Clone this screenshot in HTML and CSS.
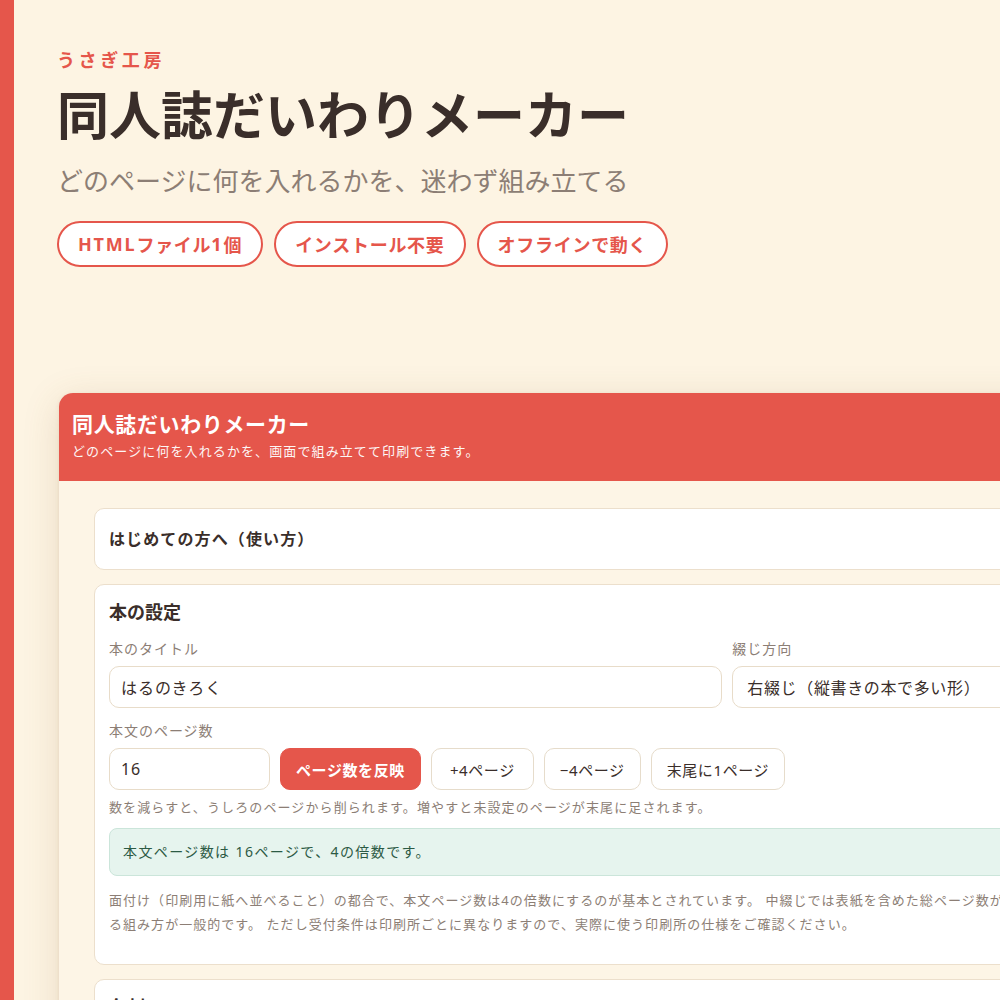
FILE: index.html
```html
<!DOCTYPE html>
<html lang="ja">
<head>
<meta charset="utf-8">
<title>同人誌だいわりメーカー</title>
<link rel="stylesheet" href="styles.css">
</head>
<body>
<div class="page">
  <header class="hero">
    <div class="eyebrow">うさぎ工房</div>
    <h1 class="hero-title">同人誌だいわりメーカー</h1>
    <p class="hero-sub">どのページに何を入れるかを、迷わず組み立てる</p>
    <div class="pills">
      <span class="pill"><span class="latin">HTML</span>ファイル<span class="latin">1</span>個</span>
      <span class="pill">インストール不要</span>
      <span class="pill">オフラインで動く</span>
    </div>
  </header>

  <section class="app">
    <div class="app-head">
      <div class="app-title">同人誌だいわりメーカー</div>
      <div class="app-sub">どのページに何を入れるかを、画面で組み立てて印刷できます。</div>
    </div>
    <div class="app-body">
      <div class="panel panel-summary">はじめての方へ（使い方）</div>

      <div class="panel">
        <h2 class="panel-title">本の設定</h2>
        <div class="grid2">
          <div class="field">
            <label class="label">本のタイトル</label>
            <div class="input">はるのきろく</div>
          </div>
          <div class="field">
            <label class="label">綴じ方向</label>
            <div class="input select">右綴じ（縦書きの本で多い形）</div>
          </div>
        </div>
        <div class="field">
          <label class="label">本文のページ数</label>
          <div class="row">
            <div class="input num">16</div>
            <button class="btn btn-primary">ページ数を反映</button>
            <button class="btn btn-step">+4ページ</button>
            <button class="btn">−4ページ</button>
            <button class="btn">末尾に1ページ</button>
          </div>
        </div>
        <p class="hint">数を減らすと、うしろのページから削られます。増やすと未設定のページが末尾に足されます。</p>
        <div class="notice">本文ページ数は 16ページで、4の倍数です。</div>
        <p class="note">面付け（印刷用に紙へ並べること）の都合で、本文ページ数は4の倍数にするのが基本とされています。 中綴じでは表紙を含めた総ページ数が4の倍数にな<br>る組み方が一般的です。 ただし受付条件は印刷所ごとに異なりますので、実際に使う印刷所の仕様をご確認ください。</p>
      </div>

      <div class="panel">
        <h2 class="panel-title">台割</h2>
      </div>
    </div>
  </section>
</div>
</body>
</html>
```
FILE: styles.css
```css
html, body {
  margin: 0;
  padding: 0;
  overflow: hidden;
  background: #fdf4e3;
}
body {
  font-family: "Noto Sans", "Noto Sans CJK JP", sans-serif;
  color: #3a2e2a;
}
.page {
  border-left: 14px solid #e5564b;
  min-height: 1000px;
  padding: 47px 0 0 43px;
  box-sizing: border-box;
}
.eyebrow {
  font-size: 18px;
  line-height: 26px;
  font-weight: 700;
  color: #e5564b;
  letter-spacing: 0.2em;
}
.hero-title {
  margin: 8px 0 0;
  font-size: 52px;
  line-height: 68px;
  font-weight: 700;
  color: #3a2e2a;
}
.hero-sub {
  margin: 13px 0 0;
  font-size: 26px;
  line-height: 39px;
  color: #8c7e75;
}
.pills {
  display: flex;
  gap: 11px;
  margin-top: 20px;
}
.pill {
  display: inline-flex;
  align-items: center;
  height: 46px;
  box-sizing: border-box;
  padding: 0 19px;
  border: 2px solid #e5564b;
  border-radius: 23px;
  background: #fff;
  color: #e5564b;
  font-size: 18px;
  font-weight: 700;
  letter-spacing: 0.04em;
}
.latin {
  letter-spacing: 0.1em;
}
.app {
  margin: 126px 0 0 2px;
  width: 1030px;
  background: #fdf5e6;
  border-radius: 14px;
  overflow: hidden;
  box-shadow: 0 8px 36px rgba(140, 100, 50, 0.18), 0 1px 4px rgba(140, 100, 50, 0.12);
}
.app-head {
  background: #e5564b;
  color: #fff;
  padding: 17px 13px 17px;
  height: 88px;
  box-sizing: border-box;
}
.app-title {
  font-size: 21px;
  line-height: 28px;
  font-weight: 700;
  letter-spacing: 0.03em;
}
.app-sub {
  margin-top: 3px;
  font-size: 13px;
  line-height: 20px;
  letter-spacing: 0.085em;
  opacity: 0.95;
}
.app-body {
  padding: 27px 35px 40px;
  display: flex;
  flex-direction: column;
  gap: 14px;
}
.panel {
  background: #fff;
  border: 1px solid #ecdfcc;
  border-radius: 10px;
  padding: 13px 14px 14px;
}
.panel-summary {
  padding: 18px 14px;
  font-size: 16px;
  line-height: 24px;
  font-weight: 700;
  letter-spacing: 0.07em;
}
.panel-title {
  margin: 0;
  font-size: 18px;
  line-height: 28px;
  font-weight: 700;
}
.grid2 {
  display: grid;
  grid-template-columns: 2fr 1fr;
  gap: 10px;
}
.field {
  display: flex;
  flex-direction: column;
}
.label {
  margin-top: 12px;
  margin-bottom: 6px;
  font-size: 14px;
  line-height: 22px;
  color: #8c7e75;
  letter-spacing: 0.07em;
}
.input {
  height: 42px;
  box-sizing: border-box;
  border: 1px solid #e8dcc9;
  border-radius: 10px;
  background: #fff;
  padding: 0 11px;
  display: flex;
  align-items: center;
  font-size: 16px;
  letter-spacing: 0.06em;
  color: #3a2e2a;
}
.select {
  padding-left: 14px;
  letter-spacing: 0.04em;
}
.num {
  width: 161px;
}
.row {
  display: flex;
  gap: 10px;
}
.btn {
  height: 42px;
  box-sizing: border-box;
  padding: 0 15px;
  border: 1px solid #e6dccb;
  border-radius: 10px;
  background: #fff;
  font-family: inherit;
  font-size: 15px;
  letter-spacing: 0.04em;
  color: #3a2e2a;
}
.btn-step {
  padding: 0 18px;
}
.btn-primary {
  background: #e5564b;
  border-color: #e5564b;
  color: #fff;
  font-weight: 700;
  font-size: 15px;
  padding: 0 15px;
}
.hint {
  margin: 6px 0 0;
  font-size: 13px;
  line-height: 22px;
  color: #8c7e75;
  letter-spacing: 0.085em;
}
.notice {
  margin-top: 10px;
  background: #e6f4ee;
  border: 1px solid #cbe5da;
  border-radius: 8px;
  padding: 12px 13px;
  font-size: 14px;
  line-height: 22px;
  color: #2c5a44;
  letter-spacing: 0.1em;
}
.note {
  margin: 12px 0 14px;
  font-size: 13px;
  line-height: 24px;
  color: #8c7e75;
  letter-spacing: 0.08em;
  white-space: nowrap;
}
```
